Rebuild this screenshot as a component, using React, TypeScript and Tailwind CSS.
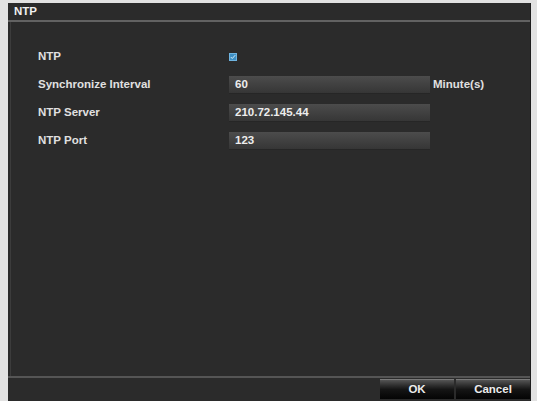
import React from 'react';

const rows = [
  { label: 'Synchronize Interval', value: '60', unit: 'Minute(s)' },
  { label: 'NTP Server', value: '210.72.145.44' },
  { label: 'NTP Port', value: '123' },
];

export default function App() {
  return (
    <div
      className="w-[537px] h-[401px] bg-[#e2e2e2] pl-[8px] pt-[3px] pr-[6px] flex"
      style={{ fontFamily: '"Liberation Sans", Arial, sans-serif' }}
    >
      <div className="flex-1 bg-[#2b2b2b] flex flex-col border-r border-[#1e1e1e]">
        {/* Title bar */}
        <div className="h-[17px] px-[6px] flex items-center text-[11.5px] font-bold text-[#f0f0f0]">NTP</div>
        <div className="h-[2px] bg-[#626262]" />

        {/* Content */}
        <div className="flex-1 ml-[2px] border-l border-[#3c3c3c] pt-[26px] pl-[27px]">
          <div className="grid grid-cols-[191px_201px_auto] auto-rows-[18px] gap-y-[10px] items-center text-[11.5px] font-bold text-[#e0e0e0]">
            <div>NTP</div>
            <div className="flex items-center">
              <div className="w-[8px] h-[8px] bg-[#3d8fc4] border border-[#6fb4e0] flex items-center justify-center">
                <svg viewBox="0 0 8 8" className="w-[6px] h-[6px]">
                  <path d="M1 4 L3 6 L7 1.5" stroke="#d8ecf8" strokeWidth="1.3" fill="none" />
                </svg>
              </div>
            </div>
            <div />
            {rows.map((r) => (
              <React.Fragment key={r.label}>
                <div>{r.label}</div>
                <div className="h-[18px] bg-gradient-to-b from-[#4c4c4c] via-[#414141] to-[#363636] border-b border-[#262626] flex items-center pl-[6px] text-[#ededed]">
                  {r.value}
                </div>
                <div className="pl-[3px]">{r.unit ?? ''}</div>
              </React.Fragment>
            ))}
          </div>
        </div>

        {/* Bottom bar */}
        <div className="h-[2px] bg-[#555555]" />
        <div className="h-[23px] flex justify-end items-start pt-[1px] gap-[2px]">
          <button className="w-[74px] h-[20px] bg-gradient-to-b from-[#555555] via-[#151515] to-[#050505] border-t border-[#7a7a7a] text-[11.5px] font-bold text-[#ececec]">
            OK
          </button>
          <button className="w-[74px] h-[20px] bg-gradient-to-b from-[#555555] via-[#151515] to-[#050505] border-t border-[#7a7a7a] text-[11.5px] font-bold text-[#ececec]">
            Cancel
          </button>
        </div>
      </div>
    </div>
  );
}
